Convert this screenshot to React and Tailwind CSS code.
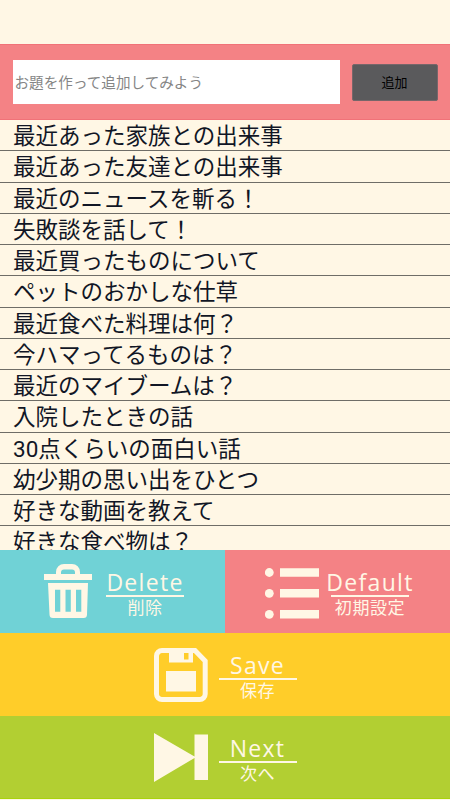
import clsx from "clsx"

const topics = [
  "最近あった家族との出来事",
  "最近あった友達との出来事",
  "最近のニュースを斬る！",
  "失敗談を話して！",
  "最近買ったものについて",
  "ペットのおかしな仕草",
  "最近食べた料理は何？",
  "今ハマってるものは？",
  "最近のマイブームは？",
  "入院したときの話",
  "30点くらいの面白い話",
  "幼少期の思い出をひとつ",
  "好きな動画を教えて",
  "好きな食べ物は？",
]

function TrashIcon() {
  return (
    <svg className="mt-3.5 w-12 h-[54px] shrink-0" viewBox="0 0 48 54" fill="currentColor">
      <path d="M0 10h12V8a8 8 0 0 1 8-8h8a8 8 0 0 1 8 8v2h12v6H0zM17 10h14V8.500a3 3 0 0 0-3-3h-8a3 3 0 0 0-3 3z" fillRule="evenodd" />
      <path d="M4 19h40l-1 31.500a3.500 3.500 0 0 1-3.500 3.500H9a3.500 3.500 0 0 1-3.500-3.500zM11 25.700v22h5.300v-22zM21.500 25.700v22h5.300v-22zM32 25.700v22h5.300v-22z" fillRule="evenodd" />
    </svg>
  )
}

function ListIcon() {
  return (
    <svg className="mt-[17.5px] w-[54px] h-[51px] shrink-0" viewBox="0 0 54 51" fill="currentColor">
      <circle cx="4.300" cy="4.500" r="4.400" />
      <circle cx="4.300" cy="25.300" r="4.400" />
      <circle cx="4.300" cy="46.300" r="4.400" />
      <path d="M15 .3h39v8.500H15zM15 21h39v8.500H15zM15 42h39v8.500H15z" />
    </svg>
  )
}

function SaveIcon() {
  return (
    <svg className="mt-[15px] w-[54px] h-[54px] shrink-0" viewBox="0 0 54 54" fill="currentColor">
      <path d="M8 2.500h33L51.200 13v33a5.500 5.500 0 0 1-5.500 5.500H8A5.500 5.500 0 0 1 2.500 46V8A5.500 5.500 0 0 1 8 2.500z" fill="none" stroke="currentColor" strokeWidth="5" />
      <path d="M15 3h24v11.500H15zM30 5v6.500h4.500V5z" fillRule="evenodd" />
      <path d="M12 23h30v20.500H12z" />
    </svg>
  )
}

function NextIcon() {
  return (
    <svg className="mt-[17px] w-[54px] h-[49px] shrink-0" viewBox="0 0 54 49" fill="currentColor">
      <path d="M0 0l40.500 23.500V1.500H54v45.500H40.500V25L0 49z" />
    </svg>
  )
}

function ActionButton({ icon, title, label, className }) {
  return (
    <button className={clsx("flex h-[83px] items-start text-[#fff7e5]", className)}>
      {icon}
      <span className="flex w-[78px] flex-col items-center pt-[18px] whitespace-nowrap">
        <span className="h-[27px] font-['Open_Sans','Noto_Sans',sans-serif] text-[23px] leading-[28px] tracking-[1.3px]">
          {title}
        </span>
        <span className="h-[1.5px] w-full bg-[#fff7e5]" />
        <span className="font-['Noto_Sans_CJK_JP',sans-serif] text-[17px] leading-[19px] tracking-[0.6px]">{label}</span>
      </span>
    </button>
  )
}

export default function App() {
  return (
    <div className="flex h-[800px] w-[450px] flex-col overflow-hidden bg-[#fff7e5] font-['Roboto','Noto_Sans_CJK_JP',sans-serif]">
      <div className="h-11 shrink-0" />

      <header className="flex h-[76px] shrink-0 items-start border-y border-[#f17278] bg-[#f48285] pl-[13px]">
        <input
          className="mt-[15px] h-11 w-[327px] bg-white px-[1.5px] pt-0.5 text-[14.6px] text-black outline-none placeholder:text-[#858585]"
          placeholder="お題を作って追加してみよう"
        />
        <button className="mt-[19px] ml-[11.5px] h-[37px] w-[86px] rounded-[2px] border border-[#77666a] bg-[#5a5a5c] text-[13px] text-black">
          追加
        </button>
      </header>

      <ul className="h-[430px] shrink-0 overflow-hidden">
        {topics.map((topic) => (
          <li
            key={topic}
            className="h-[31.25px] border-b border-[#6f6d67] pl-[13px] text-[22.5px] leading-[33px] whitespace-nowrap text-[#111625]"
          >
            {topic}
          </li>
        ))}
      </ul>

      <footer className="shrink-0">
        <div className="grid grid-cols-2">
          <ActionButton icon={<TrashIcon />} title="Delete" label="削除" className="gap-3.5 bg-[#70d2d6] pl-11" />
          <ActionButton icon={<ListIcon />} title="Default" label="初期設定" className="gap-3 bg-[#f48285] pl-10" />
        </div>
        <ActionButton
          icon={<SaveIcon />}
          title="Save"
          label="保存"
          className="w-full gap-[11px] bg-[#ffcd29] pl-[153.5px]"
        />
        <ActionButton
          icon={<NextIcon />}
          title="Next"
          label="次へ"
          className="w-full gap-[11px] border-b border-[#a9d30c] bg-[#b2cf32] pl-[153.5px]"
        />
      </footer>
    </div>
  )
}
